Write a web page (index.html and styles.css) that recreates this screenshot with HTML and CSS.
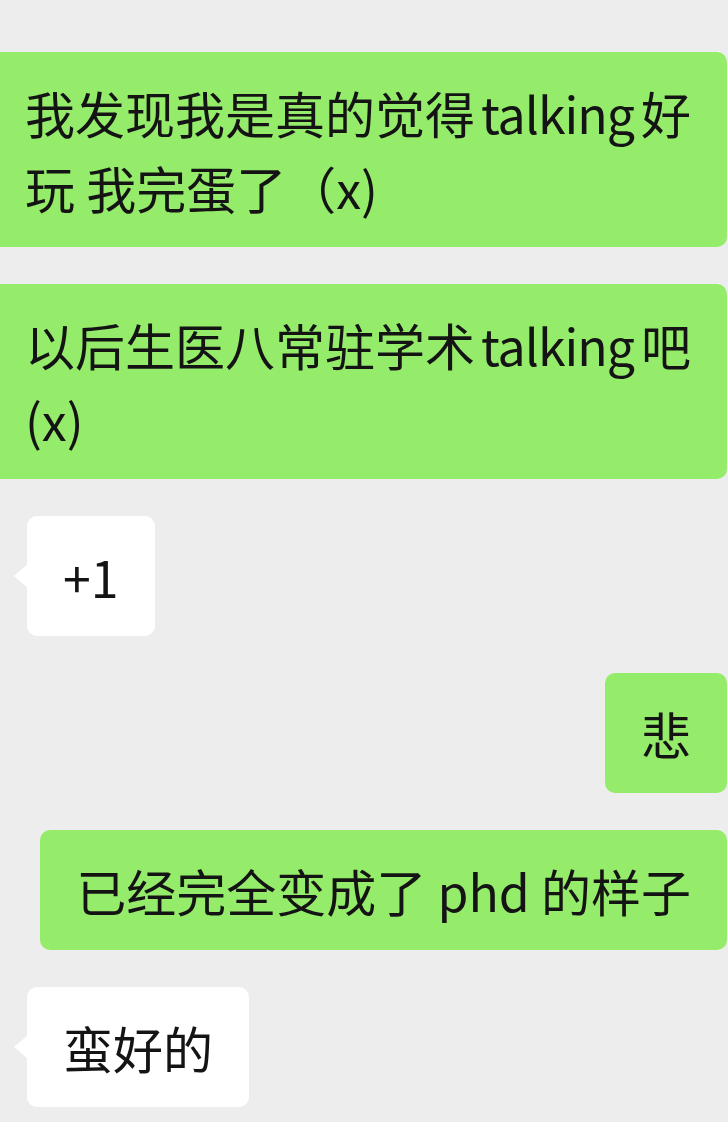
FILE: index.html
```html
<!DOCTYPE html>
<html lang="zh-CN">
<head>
<meta charset="utf-8">
<title>Chat</title>
<link rel="stylesheet" href="styles.css">
</head>
<body>
<div class="chat">
  <div class="row sent">
    <div class="bubble green">我发现我是真的觉得<span class="lat">talking</span>好<br>玩 我完蛋了（x)</div>
  </div>
  <div class="row sent">
    <div class="bubble green">以后生医八常驻学术<span class="lat">talking</span>吧<br>(x)</div>
  </div>
  <div class="row recv">
    <div class="bubble white">+1</div>
  </div>
  <div class="row sent">
    <div class="bubble green">悲</div>
  </div>
  <div class="row sent">
    <div class="bubble green">已经完全变成了 phd 的样子</div>
  </div>
  <div class="row recv">
    <div class="bubble white">蛮好的</div>
  </div>
</div>
</body>
</html>
```
FILE: styles.css
```css
html, body {
  margin: 0;
  padding: 0;
}
body {
  background: #ededed;
  width: 728px;
  height: 1122px;
  overflow: hidden;
  font-family: "Noto Sans CJK SC", "Noto Sans", sans-serif;
  color: #141414;
}
.chat {
  display: flex;
  flex-direction: column;
  gap: 37px;
  padding-top: 52px;
}
.row {
  display: flex;
}
.row.sent {
  justify-content: flex-end;
  padding-right: 1px;
}
.row.recv {
  justify-content: flex-start;
  padding-left: 27px;
}
.bubble {
  position: relative;
  font-size: 50px;
  line-height: 75px;
  padding: 23px 36px 22px;
  border-radius: 10px;
  white-space: nowrap;
  flex-shrink: 0;
}
.green {
  background: #95ec6b;
}
.white {
  background: #ffffff;
}
.white::before {
  content: "";
  position: absolute;
  left: -13px;
  top: 48px;
  width: 0;
  height: 0;
  border-top: 12px solid transparent;
  border-bottom: 12px solid transparent;
  border-right: 14px solid #ffffff;
}
.lat {
  margin: 0 7px 0 6px;
  letter-spacing: -1px;
}
```
